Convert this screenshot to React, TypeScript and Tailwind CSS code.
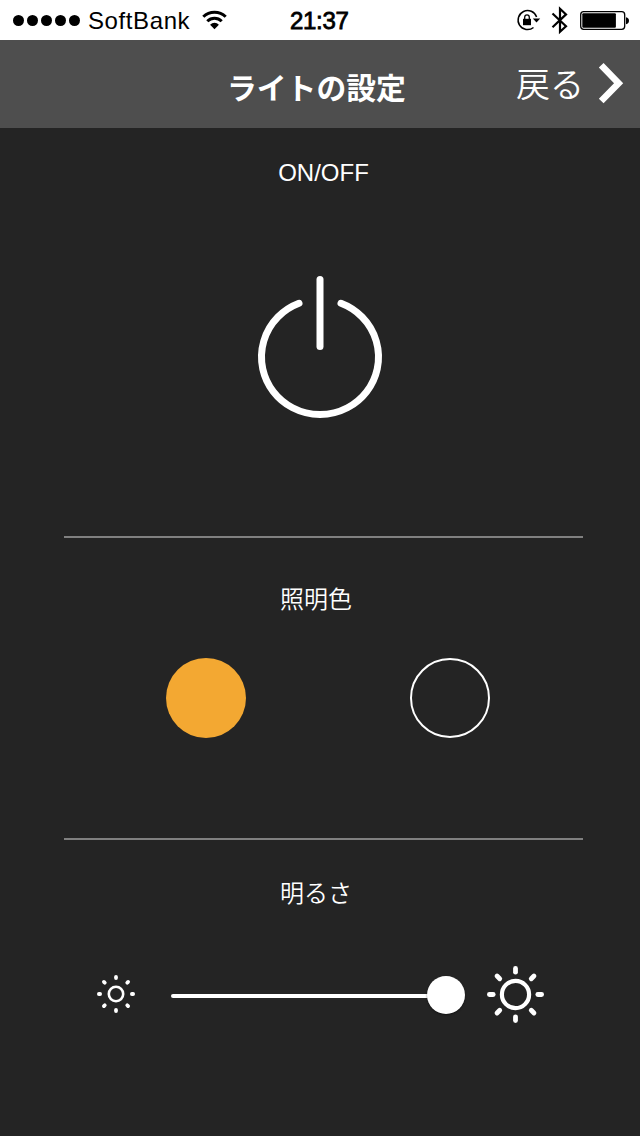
import { useState } from 'react'

const RAYS = [0, 45, 90, 135, 180, 225, 270, 315]

function StatusBar() {
  return (
    <div className="flex h-10 bg-white text-black">
      <svg width="84" height="40" className="shrink-0">
        {[18.5, 32.5, 46.5, 60.5, 74.5].map(x => <circle key={x} cx={x} cy="20.5" r="5.5" />)}
      </svg>
      <span className="ml-1 w-[105px] text-2xl leading-[41px] tracking-[0.6px]">SoftBank</span>
      <svg width="30" height="40" className="ml-[6px] shrink-0" fill="none" stroke="currentColor" strokeWidth="3">
        <path d="M4.3 16.8a16 16 0 0 1 22.4 0M8.3 21.3a10.2 10.2 0 0 1 14.4 0" />
        <path d="M11.1 24.7a6.2 6.2 0 0 1 8.8 0L15.5 29.2z" fill="currentColor" stroke="none" />
      </svg>
      <span className="ml-[61px] w-[70px] text-2xl leading-[41px] tracking-[-0.3px] [-webkit-text-stroke:0.8px_black]">21:37</span>
      <svg width="130" height="40" viewBox="510 0 130 40" className="ml-auto shrink-0" fill="none" stroke="currentColor">
        <path d="M536.6 17A9.5 9.5 0 1 0 533.5 27.5" strokeWidth="1.5" />
        <path d="M532.8 18.6h7.4l-3.7 4z" fill="currentColor" stroke="none" />
        <rect x="523" y="18.8" width="8" height="6.4" fill="currentColor" stroke="none" />
        <path d="M524.7 19v-1.8a2.3 2.3 0 0 1 4.6 0V19" strokeWidth="1.3" />
        <path d="M552.5 13.5 566 26.2l-6 5.6V8.8l6 5.6-13.5 12.8" strokeWidth="2.2" />
        <rect x="580.7" y="11.7" width="44" height="17.6" rx="3" strokeWidth="1.3" />
        <rect x="582.3" y="13.2" width="33.6" height="14.6" rx="1" fill="currentColor" stroke="none" />
        <path d="M626 17.2c4 .6 4 6.4 0 7z" fill="currentColor" stroke="none" />
      </svg>
    </div>
  )
}

function Sun({ size, ring, stroke, from, to, ray }: { size: number; ring: number; stroke: number; from: number; to: number; ray: number }) {
  return (
    <svg width={size} height={size} viewBox={`${-size / 2} ${-size / 2} ${size} ${size}`} fill="none" stroke="white" className="shrink-0">
      <circle r={ring} strokeWidth={stroke} />
      {RAYS.map(a => <path key={a} d={`M0 ${-from}V${-to}`} strokeWidth={ray} strokeLinecap="round" transform={`rotate(${a})`} />)}
    </svg>
  )
}

export default function App() {
  const [on, setOn] = useState(true)

  return (
    <main className="h-[1136px] w-[640px] overflow-hidden bg-[#242424] font-['Liberation_Sans','Noto_Sans_CJK_JP',sans-serif] text-white">
      <StatusBar />
      <header className="flex h-[88px] bg-[#4e4e4e]">
        <h1 className="ml-[227px] w-[180px] text-[29.8px] leading-[97px] font-bold whitespace-nowrap">ライトの設定</h1>
        <button className="ml-[109px] flex">
          <span className="w-[70px] text-left text-[34px] leading-[91px] font-[350] whitespace-nowrap">戻る</span>
          <svg width="40" height="88" viewBox="590 40 40 88" className="ml-1" fill="none" stroke="white" strokeWidth="6.6">
            <path d="m601.2 65.2 17.4 18L601.2 101" />
          </svg>
        </button>
      </header>

      <section className="ml-16 h-[410px] w-[519px] border-b-2 border-[#808080] pt-7">
        <h2 className="text-center text-2xl leading-[34px]">ON/OFF</h2>
        <button onClick={() => setOn(!on)} aria-pressed={on} className="mt-[78px] ml-[186px] block">
          <svg width="140" height="160" viewBox="250 268 140 160" fill="none" stroke="white" strokeWidth="7" strokeLinecap="round">
            <path d="M320 279.5v67" />
            <path d="M299 303.3a58.5 57.5 0 1 0 42 0" />
          </svg>
        </button>
      </section>

      <section className="ml-16 h-[302px] w-[519px] border-b-2 border-[#808080] pt-11">
        <h2 className="mr-[15px] text-center text-2xl leading-[36px] font-[350]">照明色</h2>
        <div className="mt-10 ml-[102px] flex gap-[164px]">
          <button className="size-20 rounded-full bg-[#f3a832]" />
          <button className="size-20 rounded-full border-2 border-white" />
        </div>
      </section>

      <section className="ml-16 w-[519px] pt-9">
        <h2 className="mr-[15px] text-center text-2xl leading-[36px] font-[350]">明るさ</h2>
        <div className="mt-[52px] ml-[31px] flex h-[60px] items-center">
          <Sun size={42} ring={7.2} stroke={2.6} from={15.9} to={17.1} ray={3.8} />
          <div className="mt-[3px] ml-[34px] flex w-[294px] items-center">
            <div className="-mr-1 h-1 grow rounded-full bg-white" />
            <div className="-mt-0.5 size-[38px] rounded-full bg-white shadow-[0_1px_2px_rgba(0,0,0,0.5)]" />
          </div>
          <div className="ml-5"><Sun size={61} ring={13.6} stroke={4.2} from={22.3} to={26.1} ray={4.8} /></div>
        </div>
      </section>
    </main>
  )
}
